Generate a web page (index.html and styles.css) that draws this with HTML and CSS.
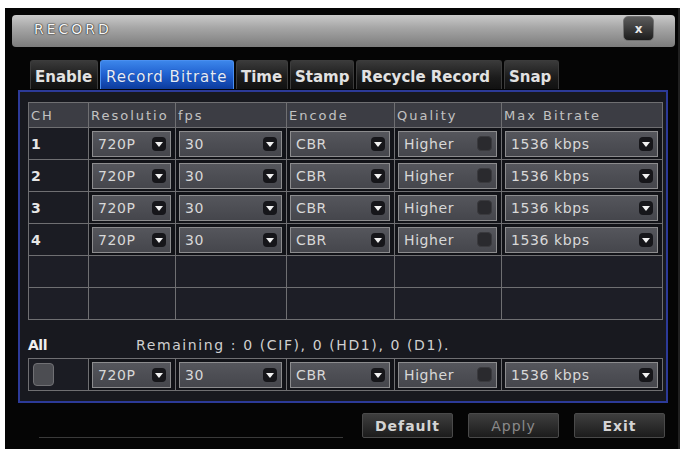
FILE: index.html
```html
<!DOCTYPE html>
<html>

<head>
    <title>Record</title>
    <link rel="stylesheet" href="styles.css">
</head>

<body>
    <div class="dialog">
        <div class="titlebar">
            <span class="title">RECORD</span>
            <button class="close">x</button>
        </div>

        <div class="tabs">
            <div class="tab tab-enable">Enable</div>
            <div class="tab tab-bitrate active">Record Bitrate</div>
            <div class="tab tab-time">Time</div>
            <div class="tab tab-stamp">Stamp</div>
            <div class="tab tab-recycle">Recycle Record</div>
            <div class="tab tab-snap">Snap</div>
        </div>

        <div class="panel">
            <table class="grid">
                <colgroup>
                    <col class="c-ch">
                    <col class="c-res">
                    <col class="c-fps">
                    <col class="c-enc">
                    <col class="c-qua">
                    <col class="c-max">
                </colgroup>
                <tr class="head">
                    <td>CH</td>
                    <td>Resolutio</td>
                    <td>fps</td>
                    <td>Encode</td>
                    <td>Quality</td>
                    <td>Max Bitrate</td>
                </tr>
                <tr class="row">
                    <td class="ch">1</td>
                    <td><div class="sel"><span>720P</span><i class="arr"></i></div></td>
                    <td><div class="sel"><span>30</span><i class="arr"></i></div></td>
                    <td><div class="sel"><span>CBR</span><i class="arr"></i></div></td>
                    <td><div class="sel off"><span>Higher</span><i class="arr"></i></div></td>
                    <td><div class="sel"><span>1536 kbps</span><i class="arr"></i></div></td>
                </tr>
                <tr class="row">
                    <td class="ch">2</td>
                    <td><div class="sel"><span>720P</span><i class="arr"></i></div></td>
                    <td><div class="sel"><span>30</span><i class="arr"></i></div></td>
                    <td><div class="sel"><span>CBR</span><i class="arr"></i></div></td>
                    <td><div class="sel off"><span>Higher</span><i class="arr"></i></div></td>
                    <td><div class="sel"><span>1536 kbps</span><i class="arr"></i></div></td>
                </tr>
                <tr class="row">
                    <td class="ch">3</td>
                    <td><div class="sel"><span>720P</span><i class="arr"></i></div></td>
                    <td><div class="sel"><span>30</span><i class="arr"></i></div></td>
                    <td><div class="sel"><span>CBR</span><i class="arr"></i></div></td>
                    <td><div class="sel off"><span>Higher</span><i class="arr"></i></div></td>
                    <td><div class="sel"><span>1536 kbps</span><i class="arr"></i></div></td>
                </tr>
                <tr class="row">
                    <td class="ch">4</td>
                    <td><div class="sel"><span>720P</span><i class="arr"></i></div></td>
                    <td><div class="sel"><span>30</span><i class="arr"></i></div></td>
                    <td><div class="sel"><span>CBR</span><i class="arr"></i></div></td>
                    <td><div class="sel off"><span>Higher</span><i class="arr"></i></div></td>
                    <td><div class="sel"><span>1536 kbps</span><i class="arr"></i></div></td>
                </tr>
                <tr class="row empty">
                    <td></td><td></td><td></td><td></td><td></td><td></td>
                </tr>
                <tr class="row empty">
                    <td></td><td></td><td></td><td></td><td></td><td></td>
                </tr>
            </table>

            <div class="all-line">
                <span class="all">All</span>
                <span class="remaining">Remaining : 0 (CIF), 0 (HD1), 0 (D1).</span>
            </div>

            <table class="grid all-grid">
                <colgroup>
                    <col class="c-ch">
                    <col class="c-res">
                    <col class="c-fps">
                    <col class="c-enc">
                    <col class="c-qua">
                    <col class="c-max">
                </colgroup>
                <tr class="row">
                    <td class="ch"><i class="check"></i></td>
                    <td><div class="sel"><span>720P</span><i class="arr"></i></div></td>
                    <td><div class="sel"><span>30</span><i class="arr"></i></div></td>
                    <td><div class="sel"><span>CBR</span><i class="arr"></i></div></td>
                    <td><div class="sel off"><span>Higher</span><i class="arr"></i></div></td>
                    <td><div class="sel"><span>1536 kbps</span><i class="arr"></i></div></td>
                </tr>
            </table>
        </div>

        <div class="footer">
            <div class="status-line"></div>
            <button class="btn">Default</button>
            <button class="btn dim">Apply</button>
            <button class="btn">Exit</button>
        </div>
    </div>
</body>

</html>
```

FILE: styles.css
```css
html,
body {
    margin: 0;
    padding: 0;
    background: #fff;
}

body {
    font-family: "DejaVu Sans", "Liberation Sans", sans-serif;
}

.dialog {
    margin: 8px 0 0 5px;
    width: 675px;
    height: 441px;
    background: #050505;
    display: flex;
    flex-direction: column;
    box-sizing: border-box;
    border-right: 2px solid #202020;
}

.titlebar {
    margin: 7px 3px 0 7px;
    height: 32px;
    border-radius: 4px;
    background: linear-gradient(#cacaca, #a6a6a6 40%, #7c7c7c);
    display: flex;
    align-items: center;
    justify-content: space-between;
    padding: 0 21px 0 22px;
}

.title {
    font-family: "DejaVu Sans", sans-serif;
    font-size: 14px;
    letter-spacing: 3px;
    color: #f6f6f6;
    text-shadow: 0 0 1px #222, 0 0 1px #222, 0 0 2px #555;
    margin-top: -5px;
}

.close {
    width: 31px;
    height: 25px;
    margin-top: -5px;
    border: 1px solid #707070;
    border-radius: 5px;
    background: linear-gradient(#5c5c5c, #1c1c1c);
    color: #e8e8e8;
    font-family: "DejaVu Sans", sans-serif;
    font-weight: bold;
    font-size: 12px;
    line-height: 18px;
    padding: 0;
}

.tabs {
    display: flex;
    gap: 2px;
    margin-top: 13px;
    padding-left: 25px;
}

.tab {
    height: 29px;
    box-sizing: border-box;
    border: 1px solid #3c3c3c;
    border-bottom: none;
    border-radius: 3px 3px 0 0;
    background: linear-gradient(#3a3a3a, #1b1b1b 60%, #111);
    color: #e2e2e2;
    font-weight: bold;
    font-size: 15px;
    line-height: 32px;
    padding-left: 4px;
    white-space: nowrap;
    overflow: hidden;
}

.tab.active {
    background: linear-gradient(#3c86ea, #1f5fcf 50%, #0c3b9c);
    border-color: #4a8ff0;
    color: #e4ecfa;
    font-weight: normal;
    letter-spacing: 1px;
    padding-left: 5px;
    text-shadow: 0 0 1px #0c2a70;
}

.tab-enable { width: 68px; }
.tab-bitrate { width: 134px; }
.tab-time { width: 52px; }
.tab-stamp { width: 64px; }
.tab-recycle { width: 146px; }
.tab-snap { width: 55px; }

.panel {
    margin: 1px 10px 0 13px;
    height: 313px;
    box-sizing: border-box;
    border: 2px solid #2c3a98;
    background: #18191f;
    padding: 10px 7px 0 8px;
}

.grid {
    width: 634px;
    table-layout: fixed;
    border-collapse: collapse;
    color: #c8c8c8;
}

.grid td {
    border: 1px solid #6f6f72;
    padding: 0 4px 0 3px;
    font-size: 14px;
    white-space: nowrap;
    overflow: hidden;
}

.c-ch { width: 60px; }
.c-res { width: 87px; }
.c-fps { width: 111px; }
.c-enc { width: 108px; }
.c-qua { width: 107px; }
.c-max { width: 161px; }

.head td {
    height: 24px;
    background: #3c3d44;
    color: #c2c2c2;
    font-size: 13px;
    letter-spacing: 2px;
    padding: 0 2px;
}

.row td {
    height: 31px;
    background: #121318;
}

.row td.ch {
    background: #1b1c23;
    color: #e6e6e6;
    font-weight: bold;
    padding-left: 2px;
}

.row.empty td {
    background: #1d1e26;
}

.sel {
    display: flex;
    align-items: center;
    justify-content: space-between;
    height: 26px;
    box-sizing: border-box;
    border: 1px solid #8c8c8e;
    background: linear-gradient(#55565c, #45464c);
    padding: 0 4px 0 5px;
    color: #d8d8d8;
    font-size: 14px;
    letter-spacing: 0.6px;
}

.arr {
    width: 14px;
    height: 14px;
    border-radius: 4px;
    background: #16161a;
    display: flex;
    align-items: center;
    justify-content: center;
}

.arr::after {
    content: "";
    border-left: 4px solid transparent;
    border-right: 4px solid transparent;
    border-top: 5px solid #f2f2f2;
    margin-top: 1px;
}

.sel.off .arr {
    background: #2a2a2e;
    border: 1px solid #3a3a3e;
    width: 13px;
    height: 13px;
}

.sel.off .arr::after {
    display: none;
}

.all-line {
    height: 26px;
    margin-top: 12px;
    display: flex;
    align-items: center;
    font-size: 14px;
    color: #d0d0d0;
}

.all {
    width: 108px;
    color: #f0f0f0;
    font-weight: bold;
    letter-spacing: -0.5px;
}

.remaining {
    letter-spacing: 1.6px;
}

.all-grid {
    margin-top: 0;
}

.all-grid .row td {
    height: 31px;
}

.check {
    display: block;
    width: 19px;
    height: 21px;
    margin-left: 2px;
    border: 1px solid #707074;
    border-radius: 4px;
    background: #4c4d52;
}

.footer {
    display: flex;
    align-items: flex-end;
    height: 35px;
    margin-top: 0;
    padding-right: 13px;
    gap: 15px;
}

.status-line {
    flex: 1;
    height: 1px;
    margin: 0 4px 0 34px;
    background: #3a3a3a;
}

.btn {
    width: 91px;
    height: 25px;
    border: 1px solid #4a4a4a;
    border-radius: 2px;
    background: linear-gradient(#3e3e3e, #1c1c1c);
    color: #d4d4d4;
    font-family: "DejaVu Sans", sans-serif;
    font-weight: bold;
    font-size: 14px;
    letter-spacing: 1px;
    padding: 0;
}

.btn.dim {
    color: #8a8a8a;
    font-weight: normal;
}
```
